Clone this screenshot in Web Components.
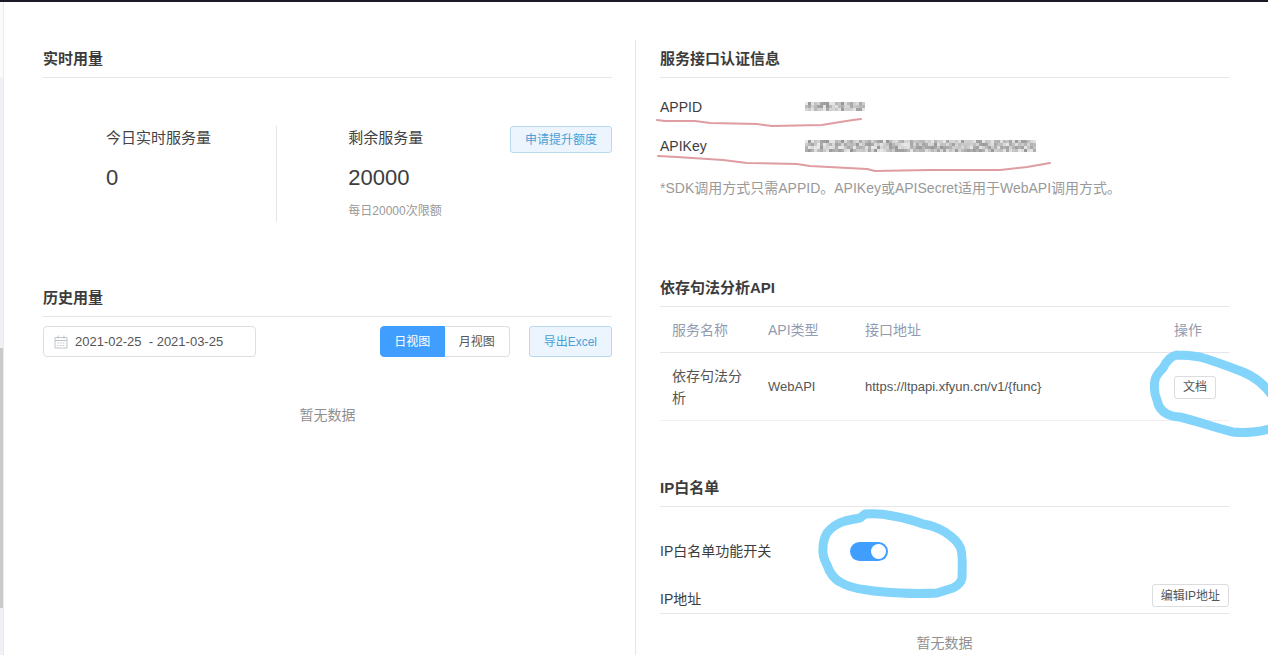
<!DOCTYPE html>
<html lang="zh-CN">
<head>
<meta charset="utf-8">
<meta name="viewport" content="width=device-width, initial-scale=1">
<title>服务用量</title>
<style>
  body {
    margin: 0;
    background: #fff;
    color: #444;
    font: 14px/22px "Liberation Sans", "Noto Sans CJK SC", sans-serif;
    --line: #e6e6e8;
    --blue: #409eff;
  }
</style>
</head>
<body>
<console-page></console-page>
<script>
function define(name, html, setup) {
  const tpl = document.createElement('template');
  tpl.innerHTML = html;
  customElements.define(name, class extends HTMLElement {
    constructor() {
      super();
      this.attachShadow({ mode: 'open' }).append(tpl.content.cloneNode(true));
    }
    connectedCallback() {
      if (setup && !this.ready) { this.ready = true; setup(this, this.shadowRoot); }
    }
  });
}

/* Section with an underlined title */
define('panel-section', `
<style>
  :host { display: block; position: relative; }
  h2 { margin: 0; font-size: 15px; line-height: 37px; font-weight: 700; color: #3c3c3c; border-bottom: 1px solid var(--line); }
</style>
<section><h2><slot name="title"></slot></h2><slot></slot></section>`);

/* Button: kind = "plain" | "tint", size = "tall" for toolbar height */
define('ui-button', `
<style>
  :host { display: inline-block; }
  button { display: block; box-sizing: border-box; height: 23px; padding: 0 8px; font: inherit; font-size: 12px; line-height: 20px;
    color: #555; background: #fff; border: 1px solid #dcdcde; border-radius: 3px; white-space: nowrap; cursor: pointer; }
  :host([kind=tint]) button { height: 27px; padding: 0 14px; color: #4a9fd6; background: #ecf5fd; border-color: #b9d9ee; }
  :host([size=tall]) button { height: 31px; }
</style>
<button type="button"><slot></slot></button>`);

/* Usage figure */
define('usage-stat', `
<style>
  :host { display: block; }
  .label { font-size: 15px; line-height: 24px; }
  .value { margin-top: 12px; font-size: 22px; line-height: 32px; color: #3c3c3c; }
  .note { margin-top: 9px; font-size: 12px; line-height: 16px; color: #999; }
</style>
<div class="label"><slot name="label"></slot></div>
<div class="value"><slot></slot></div>
<div class="note"><slot name="note"></slot></div>`);

define('date-range', `
<style>
  :host { display: block; }
  label { display: flex; align-items: center; box-sizing: border-box; width: 213px; height: 31px; padding: 0 10px;
    border: 1px solid #dcdfe3; border-radius: 4px; background: #fff; }
  svg { flex: none; width: 14px; height: 14px; margin-right: 7px; }
  input { flex: 1; min-width: 0; border: 0; padding: 0; outline: 0; background: none; font: inherit; font-size: 13px; color: #555; white-space: pre; }
</style>
<label>
  <svg viewBox="0 0 14 14" fill="none" stroke="#bfc3ca"><path d="M1 2.5h12v10.5H1zM1 5.5h12M4 0.5v3M10 0.5v3"/><path d="M3.5 8h7M3.5 10.5h7" stroke-dasharray="1.5 1.2"/></svg>
  <input type="text" aria-label="日期范围" value="2021-02-25  - 2021-03-25">
</label>`);

define('view-switch', `
<style>
  :host { display: flex; }
  button { box-sizing: border-box; width: 65px; height: 31px; padding: 0; font: inherit; font-size: 12px; line-height: 20px;
    color: #555; background: #fff; border: 1px solid #dcdfe3; cursor: pointer; }
  .on { color: #fff; background: var(--blue); border-color: var(--blue); border-radius: 4px 0 0 4px; }
  .off { border-left: 0; border-radius: 0 4px 4px 0; }
</style>
<button type="button" class="on" aria-pressed="true">日视图</button><button type="button" class="off" aria-pressed="false">月视图</button>`);

/* Mosaic that stands in for a hidden value; cols and rows count 3px cells */
define('masked-value', `
<style>
  :host { display: block; }
  svg { display: block; }
</style>
<svg role="img" aria-label="已隐藏" shape-rendering="crispEdges"></svg>`, (host, root) => {
  const svg = root.querySelector('svg');
  const cols = +host.getAttribute('cols'), rows = +host.getAttribute('rows');
  svg.setAttribute('width', cols * 3);
  svg.setAttribute('height', rows * 3);
  let seed = 17, out = '';
  for (let y = 0; y < rows; y++) for (let x = 0; x < cols; x++) {
    seed = (seed * 1103515245 + 12345) % 2147483648;
    const g = 150 + Math.floor(seed / 65536) % 84;
    out += '<rect x="' + x * 3 + '" y="' + y * 3 + '" width="3" height="3" fill="rgb(' + g + ',' + g + ',' + g + ')"/>';
  }
  svg.innerHTML = out;
});

define('credential-row', `
<style>
  :host { display: grid; grid-template-columns: 145px 1fr; align-items: center; height: 39px; color: #3c3c3c; }
</style>
<span><slot name="label"></slot></span><slot></slot>`);

define('api-table', `
<style>
  :host { display: block; }
  table { width: 100%; border-collapse: separate; border-spacing: 0; table-layout: fixed; }
  th, td { padding: 12px; text-align: left; vertical-align: middle; font-weight: 400; border-bottom: 1px solid var(--line); }
  th { height: 45px; padding: 0 12px; color: #929bb0; font-size: 14px; }
  td { height: 43px; color: #555; border-color: #f0f0f2; padding-bottom: 11px; font-size: 14px; }
  .latin { font-size: 13px; }
  th:nth-child(1) { width: 72px; } th:nth-child(2) { width: 73px; } th:nth-child(4) { width: 43px; }
</style>
<table>
  <thead><tr><th scope="col">服务名称</th><th scope="col">API类型</th><th scope="col">接口地址</th><th scope="col">操作</th></tr></thead>
  <tbody><tr><td>依存句法分析</td><td class="latin">WebAPI</td><td class="latin">https://ltpapi.xfyun.cn/v1/{func}</td><td><ui-button>文档</ui-button></td></tr></tbody>
</table>`);

define('toggle-row', `
<style>
  :host { display: grid; grid-template-columns: 190px 1fr; align-items: center; height: 40px; color: #3c3c3c; }
  input { appearance: none; display: block; box-sizing: border-box; width: 38px; height: 19px; margin: 0; padding: 2px; border-radius: 10px; background: #ccc; }
  input::before { content: ""; display: block; width: 15px; height: 15px; border-radius: 50%; background: #fff; }
  input:checked { background: var(--blue); }
  input:checked::before { margin-left: auto; }
</style>
<label for="sw"><slot></slot></label><input id="sw" type="checkbox" role="switch" checked>`);

define('scroll-rail', `
<style>
  :host { display: flex; flex-direction: column; width: 3px; border-right: 1px solid #e9e9ee; }
  .head { height: 76px; background: #fbfbfc; }
  .track { flex: 1; display: grid; grid-template-rows: 270fr 260fr 47fr; background: #f0f0f5; }
  .thumb { grid-row: 2; background: #c9cacc; }
</style>
<div class="head"></div><div class="track"><div class="thumb"></div></div>`);

/* Freehand marks laid over a section */
define('pen-mark', `
<style>
  :host { position: absolute; pointer-events: none; display: block; }
  ::slotted(svg) { display: block; }
</style>
<slot></slot>`);

define('console-page', `
<style>
  :host { display: flex; flex-direction: column; min-height: 100vh; overflow: hidden; }
  .bar { height: 2px; background: #1b1b28; }
  .body { flex: 1; display: flex; }
  main { flex: 1; display: grid; grid-template-columns: 1fr 1fr; padding: 38px 39px 0; }
  .left { padding-right: 23px; border-right: 1px solid var(--line); }
  .right { padding-left: 24px; }
  .stats { display: grid; grid-template-columns: 7fr 10fr; padding: 48px 0 57px; }
  .today { padding-left: 63px; border-right: 1px solid var(--line); }
  .remain { display: flex; justify-content: space-between; align-items: flex-start; padding-left: 71px; min-height: 96px; }
  .tools { display: flex; padding-top: 9px; }
  .tools view-switch { margin-left: auto; margin-right: 19px; }
  .empty { text-align: center; color: #909090; }
  .history .empty { margin-top: 47px; }
  .rows { padding-top: 9px; }
  .hint { margin: 12px 0 70px; color: #999; }
  .api { margin-bottom: 48px; }
  toggle-row { margin-top: 24px; }
  .ip { display: flex; justify-content: space-between; align-items: center; margin-top: 13px; border-bottom: 1px solid var(--line); color: #3c3c3c; }
  .ip ui-button { margin-bottom: 6px; }
  .white .empty { margin-top: 18px; }
  .m-red { left: -10px; top: 70px; }
  .m-doc { right: -39px; top: 71px; }
  .m-switch { left: 150px; top: 31px; }
  svg { fill: none; stroke-linecap: round; stroke-linejoin: round; }
  .blue { stroke: #82d4fb; stroke-width: 9; }
  .red { stroke: #df9da2; stroke-width: 2; }
</style>
<div class="bar"></div>
<div class="body">
  <scroll-rail></scroll-rail>
  <main>
    <div class="left">
      <panel-section>
        <span slot="title">实时用量</span>
        <div class="stats">
          <usage-stat class="today"><span slot="label">今日实时服务量</span>0</usage-stat>
          <div class="remain">
            <usage-stat><span slot="label">剩余服务量</span>20000<span slot="note">每日20000次限额</span></usage-stat>
            <ui-button kind="tint">申请提升额度</ui-button>
          </div>
        </div>
      </panel-section>
      <panel-section class="history">
        <span slot="title">历史用量</span>
        <div class="tools"><date-range></date-range><view-switch></view-switch><ui-button kind="tint" size="tall">导出Excel</ui-button></div>
        <div class="empty">暂无数据</div>
      </panel-section>
    </div>
    <div class="right">
      <panel-section>
        <span slot="title">服务接口认证信息</span>
        <div class="rows">
          <credential-row><span slot="label">APPID</span><masked-value cols="20" rows="3"></masked-value></credential-row>
          <credential-row><span slot="label">APIKey</span><masked-value cols="77" rows="4"></masked-value></credential-row>
        </div>
        <p class="hint">*SDK调用方式只需APPID。APIKey或APISecret适用于WebAPI调用方式。</p>
        <pen-mark class="m-red"><svg class="red" width="410" height="70" viewBox="650 110 410 70"><path d="M657 120 665 121 695 121 710 123 757 124 772 126 822 125 840 122 853 120 861 119M658 156 677 157 723 160 747 163 797 164 810 166 867 169 875 171 930 170 1000 170 1027 167 1050 163"/></svg></pen-mark>
      </panel-section>
      <panel-section class="api">
        <span slot="title">依存句法分析API</span>
        <api-table></api-table>
        <pen-mark class="m-doc"><svg class="blue" width="128" height="100" viewBox="1140 340 128 100"><path d="M1177 355Q1189 355 1200 357C1214 361 1230 367 1243 372Q1262 380 1273 397M1275 427Q1265 431 1253 432Q1242 433 1233 432C1215 428 1197 421 1180 417Q1173 417 1167 414Q1159 410 1157 400Q1153 391 1155 380Q1156 375 1163 368Q1169 356 1177 355"/></svg></pen-mark>
      </panel-section>
      <panel-section class="white">
        <span slot="title">IP白名单</span>
        <toggle-row>IP白名单功能开关</toggle-row>
        <div class="ip"><span>IP地址</span><ui-button>编辑IP地址</ui-button></div>
        <div class="empty">暂无数据</div>
        <pen-mark class="m-switch"><svg class="blue" width="170" height="110" viewBox="810 500 170 110"><path d="M860 518 865 514Q880 513 893 516Q910 519 923 524Q935 526 945 532Q957 540 960 547Q963 552 962 578Q961 584 953 588L937 593Q920 594 900 593Q880 592 867 590Q850 588 840 582Q831 577 827 565Q822 556 823 548Q823 540 827 533Q834 524 845 521Q854 519 860 518"/></svg></pen-mark>
      </panel-section>
    </div>
  </main>
</div>`);
</script>
</body>
</html>
